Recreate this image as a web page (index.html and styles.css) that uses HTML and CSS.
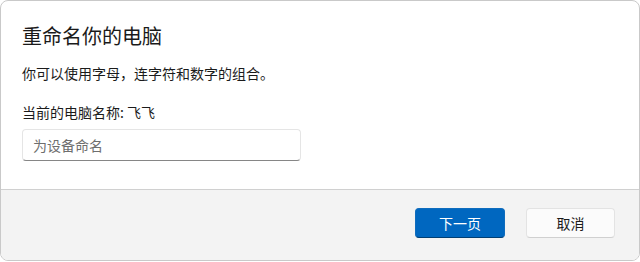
FILE: index.html
```html
<!DOCTYPE html>
<html lang="zh-CN">
<head>
  <meta charset="UTF-8" />
  <meta name="viewport" content="width=device-width, initial-scale=1.0"/>
  <title>重命名你的电脑</title>
  <link rel="stylesheet" href="styles.css">
</head>
<body>

  <div class="dialog">
    <div class="dialog-body">
      <h1 class="dialog-title">重命名你的电脑</h1>
      <p class="dialog-text">你可以使用字母，连字符和数字的组合。</p>
      <p class="current-name">当前的电脑名称: 飞飞</p>
      <input class="name-input" type="text" placeholder="为设备命名">
    </div>

    <!-- Footer with buttons -->
    <div class="dialog-footer">
      <button class="btn btn-primary">下一页</button>
      <button class="btn">取消</button>
    </div>
  </div>

</body>
</html>
```

FILE: styles.css
```css
* {
  box-sizing: border-box;
  margin: 0;
  padding: 0;
}

body {
  font-family: "Noto Sans CJK SC", "Noto Sans", sans-serif;
  background: #ffffff;
  color: #1b1b1b;
  width: 640px;
  height: 262px;
  overflow: hidden;
}

.dialog {
  width: 640px;
  height: 261px;
  border: 1px solid #c9c9c9;
  border-radius: 8px;
  overflow: hidden;
  display: flex;
  flex-direction: column;
  background: #ffffff;
}

.dialog-body {
  height: 188px;
  padding: 19px 21px 0;
}

.dialog-title {
  font-size: 20px;
  font-weight: 400;
  line-height: 32px;
  color: #1a1a1a;
}

.dialog-text {
  font-size: 14px;
  line-height: 20px;
  margin-top: 11px;
}

.current-name {
  font-size: 14px;
  line-height: 20px;
  margin-top: 19px;
}

.name-input {
  display: block;
  width: 279px;
  height: 32px;
  margin-top: 7px;
  padding: 0 10px;
  font-family: inherit;
  font-size: 14px;
  color: #1b1b1b;
  background: #ffffff;
  border: 1px solid #e5e5e5;
  border-bottom: 1px solid #868686;
  border-radius: 4px;
  outline: none;
}

.name-input::placeholder {
  color: #6e6e6e;
}

.dialog-footer {
  flex: 1;
  background: #f3f3f3;
  border-top: 1px solid #d0d0d0;
  display: flex;
  justify-content: flex-end;
  align-items: flex-start;
  gap: 21px;
  padding: 18px 24px 0;
}

.btn {
  width: 89px;
  height: 30px;
  font-family: inherit;
  font-size: 14px;
  color: #1b1b1b;
  background: #fbfbfb;
  border: 1px solid #e3e3e3;
  border-bottom-color: #d0d0d0;
  border-radius: 4px;
  cursor: pointer;
}

.btn-primary {
  width: 90px;
  background: #0067c0;
  color: #ffffff;
  border-color: #0f6cbd;
  border-bottom-color: #003e73;
}
```
